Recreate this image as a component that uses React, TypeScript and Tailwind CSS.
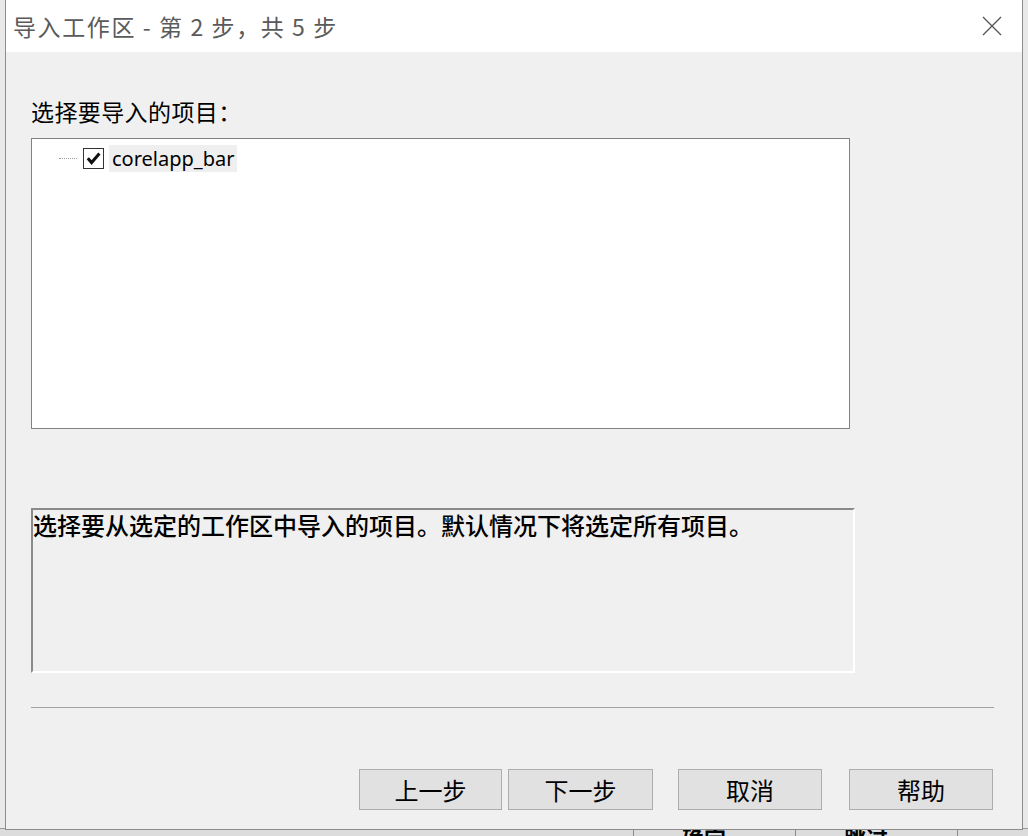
const cjk = { fontFamily: '"Noto Sans CJK SC", "Noto Sans", sans-serif' };

function WizardButton({ label, className }: { label: string; className?: string }) {
    return (
        <button
            className={`h-[41px] border border-[#adadad] bg-[#e1e1e1] text-[24px] leading-none text-black ${className ?? ''}`}
            style={cjk}
        >
            {label}
        </button>
    );
}

export default function App() {
    return (
        <div className="relative w-[1028px] h-[836px] overflow-hidden bg-[#e9e9e9]" style={cjk}>
            {/* Window behind the dialog */}
            <div className="absolute left-0 bottom-0 w-full h-[8px] bg-[#dcdcdc] border-t border-[#9a9a9a] flex">
                <div className="w-[634px] border-r border-[#8a8a8a]" />
                <div className="w-[162px] border-r border-[#8a8a8a] overflow-hidden">
                    <span className="block text-[22px] leading-none font-bold text-black pl-[48px] -mt-[3px]">确定</span>
                </div>
                <div className="w-[162px] border-r border-[#8a8a8a] overflow-hidden">
                    <span className="block text-[22px] leading-none font-bold text-black pl-[48px] -mt-[3px]">跳过</span>
                </div>
            </div>

            {/* Dialog */}
            <div className="absolute left-[5px] top-0 w-[1018px] h-[830px] bg-[#f0f0f0] border-l border-r border-b border-[#8c8c8c] flex flex-col">
                {/* Title bar */}
                <div className="h-[52px] bg-white flex items-center justify-between pl-[7px] pr-[20px]">
                    <span className="text-[23px] text-[#5a5a5a] tracking-[1.6px]">导入工作区 - 第 2 步，共 5 步</span>
                    <svg width="20" height="20" viewBox="0 0 20 20" className="text-[#555]">
                        <path d="M1 1 L19 19 M19 1 L1 19" stroke="currentColor" strokeWidth="1.3" fill="none" />
                    </svg>
                </div>

                {/* Body */}
                <div className="flex-1 flex flex-col pl-[25px] pr-[29px]">
                    <div className="mt-[44px] text-[23px] leading-[30px] tracking-[0.4px] text-black">选择要导入的项目：</div>

                    <div className="mt-[12px] w-[819px] h-[291px] bg-white border border-[#828282]">
                        <div className="flex items-center mt-[6px] ml-[27px]">
                            <div className="w-[18px] border-t border-dotted border-[#9a9a9a]" />
                            <div className="ml-[6px] w-[21px] h-[21px] border border-[#333] bg-white flex items-center justify-center">
                                <svg width="15" height="13" viewBox="0 0 15 13">
                                    <path d="M1.8 6.2 L5.6 10.6 L13.4 1.6" stroke="#111" strokeWidth="3" fill="none" />
                                </svg>
                            </div>
                            <span
                                className="ml-[5px] px-[3px] bg-[#efefef] text-[20px] leading-[27px] text-black"
                                style={{ fontFamily: '"Noto Sans", "Open Sans", sans-serif' }}
                            >
                                corelapp_bar
                            </span>
                        </div>
                    </div>

                    <div className="mt-[79px] w-[824px] h-[165px] border-t-2 border-l-2 border-t-[#8a8a8a] border-l-[#8a8a8a] border-r-2 border-b-2 border-r-white border-b-white">
                        <p className="text-[24px] leading-[30px] text-black font-medium">
                            选择要从选定的工作区中导入的项目。默认情况下将选定所有项目。
                        </p>
                    </div>

                    <div className="mt-[34px] h-px w-[963px] bg-[#a0a0a0]" />

                    <div className="mt-[61px] flex">
                        <WizardButton label="上一步" className="ml-[328px] w-[145px]" />
                        <WizardButton label="下一步" className="ml-[6px] w-[147px]" />
                        <WizardButton label="取消" className="ml-[25px] w-[146px]" />
                        <WizardButton label="帮助" className="ml-[27px] w-[146px]" />
                    </div>
                </div>
            </div>
        </div>
    );
}
